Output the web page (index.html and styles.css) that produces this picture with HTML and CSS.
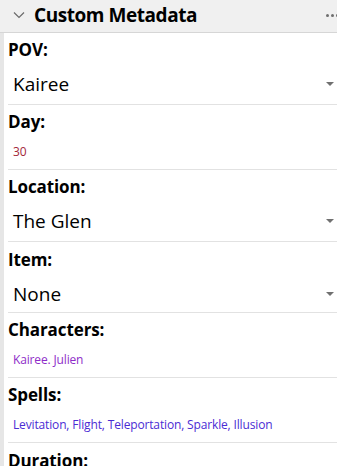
FILE: index.html
```html
<!DOCTYPE html>
<html lang="en">

<head>
    <meta charset="UTF-8">
    <meta name="viewport" content="width=device-width, initial-scale=1.0">
    <title>Custom Metadata</title>

    <link rel="stylesheet" href="styles.css">

</head>

<body>
    <header class="header">
        <svg class="chevron" width="12" height="8" viewBox="0 0 12 8">
            <path d="M1 1.5 L6 6.5 L11 1.5" fill="none" stroke="#6b6b6b" stroke-width="1.2"/>
        </svg>
        <h1 class="title">Custom Metadata</h1>
        <div class="dots"><span></span><span></span><span></span></div>
    </header>

    <section class="panel">
        <div class="field">
            <div class="label">POV:</div>
            <div class="select">Kairee<i class="arrow"></i></div>
        </div>

        <div class="field">
            <div class="label">Day:</div>
            <div class="text day">30</div>
        </div>

        <div class="field">
            <div class="label">Location:</div>
            <div class="select">The Glen<i class="arrow"></i></div>
        </div>

        <div class="field item">
            <div class="label">Item:</div>
            <div class="select">None<i class="arrow"></i></div>
        </div>

        <div class="field">
            <div class="label">Characters:</div>
            <div class="text characters">Kairee. Julien</div>
        </div>

        <div class="field">
            <div class="label">Spells:</div>
            <div class="text spells">Levitation, Flight, Teleportation, Sparkle, Illusion</div>
        </div>

        <div class="field last">
            <div class="label">Duration:</div>
        </div>
    </section>

</body>

</html>
```

FILE: styles.css
```css
body {
    font-family: "Open Sans", "Noto Sans", sans-serif;
    background-color: #ffffff;
    color: #000000;
    margin: 0px;
    height: 466px;
    overflow: hidden;
}

.header {
    display: flex;
    align-items: center;
    height: 33px;
    background-color: #f0f0f0;
    border-bottom: 1px solid #d6d6d6;
    padding-bottom: 2px;
    box-sizing: border-box;
}

.chevron {
    margin-left: 13px;
    margin-right: 9px;
}

.title {
    flex: 1;
    margin: 0px;
    font-size: 19px;
    font-weight: 700;
    line-height: 24px;
    letter-spacing: -0.45px;
}

.dots {
    display: flex;
    gap: 2px;
    margin-right: -2px;
}

.dots span {
    width: 3px;
    height: 3px;
    border-radius: 50%;
    background-color: #6e6e6e;
}

.panel {
    border-left: 4px solid #e6e6e6;
    padding-left: 4px;
    min-height: 100%;
}

.field {
    padding: 5px 0px 7px 0px;
    border-bottom: 1px solid #e2e2e2;
}

.field.item {
    padding-top: 6px;
    padding-bottom: 5px;
}

.field.last {
    padding-top: 6px;
}

.label {
    font-size: 17px;
    font-weight: 700;
    line-height: 24px;
    letter-spacing: -0.1px;
}

.select {
    position: relative;
    margin-top: 9px;
    padding-left: 5px;
    font-size: 19px;
    line-height: 26px;
}

.arrow {
    position: absolute;
    right: 3px;
    top: 11px;
    width: 0px;
    height: 0px;
    border-left: 4px solid transparent;
    border-right: 4px solid transparent;
    border-top: 4px solid #707070;
}

.text {
    margin-top: 9px;
    padding-left: 5px;
    font-size: 12px;
    line-height: 18px;
    padding-bottom: 1px;
    letter-spacing: -0.15px;
}

.day {
    color: #a3283a;
}

.characters {
    color: #8e2cc8;
}

.spells {
    color: #4a2cd4;
}
```
